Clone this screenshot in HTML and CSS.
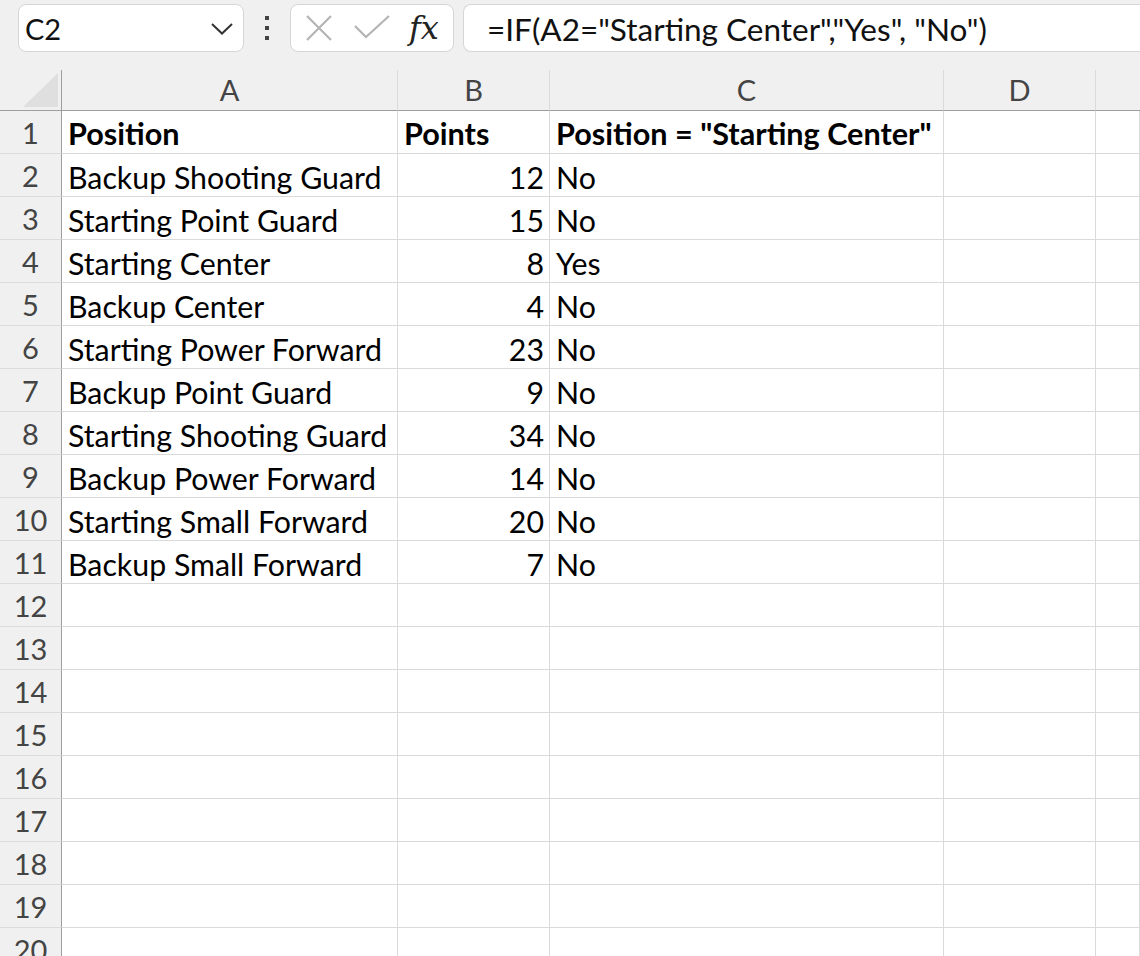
FILE: index.html
```html
<!DOCTYPE html>
<html>
<head>
<meta charset="utf-8">
<link rel="stylesheet" href="styles.css">
</head>
<body>
<div class="toolbar">
  <div class="namebox">
    <span class="name">C2</span>
    <svg class="chev" width="22" height="12" viewBox="0 0 22 12"><path d="M1 1 L11 10.5 L21 1" fill="none" stroke="#333" stroke-width="2"/></svg>
  </div>
  <div class="dots"><i></i><i></i><i></i></div>
  <div class="fxbox">
    <svg width="28" height="28" viewBox="0 0 28 28"><path d="M2 2 L26 26 M26 2 L2 26" stroke="#b4b4b4" stroke-width="2.2" fill="none"/></svg>
    <svg width="38" height="28" viewBox="0 0 38 28"><path d="M2 12 L13 23 L36 2" stroke="#b4b4b4" stroke-width="2.2" fill="none"/></svg>
    <span class="fx"><i>f</i><i>x</i></span>
  </div>
  <div class="formula">=IF(A2="Starting Center","Yes", "No")</div>
</div>
<div class="sheet">
  <div class="corner"><span class="tri"></span></div>
  <div class="ch">A</div><div class="ch">B</div><div class="ch">C</div><div class="ch">D</div><div class="ch last"></div>

  <div class="rh">1</div><div class="c b">Position</div><div class="c b">Points</div><div class="c b">Position = "Starting Center"</div><div class="c"></div><div class="c"></div>
  <div class="rh">2</div><div class="c">Backup Shooting Guard</div><div class="c n">12</div><div class="c">No</div><div class="c"></div><div class="c"></div>
  <div class="rh">3</div><div class="c">Starting Point Guard</div><div class="c n">15</div><div class="c">No</div><div class="c"></div><div class="c"></div>
  <div class="rh">4</div><div class="c">Starting Center</div><div class="c n">8</div><div class="c">Yes</div><div class="c"></div><div class="c"></div>
  <div class="rh">5</div><div class="c">Backup Center</div><div class="c n">4</div><div class="c">No</div><div class="c"></div><div class="c"></div>
  <div class="rh">6</div><div class="c">Starting Power Forward</div><div class="c n">23</div><div class="c">No</div><div class="c"></div><div class="c"></div>
  <div class="rh">7</div><div class="c">Backup Point Guard</div><div class="c n">9</div><div class="c">No</div><div class="c"></div><div class="c"></div>
  <div class="rh">8</div><div class="c">Starting Shooting Guard</div><div class="c n">34</div><div class="c">No</div><div class="c"></div><div class="c"></div>
  <div class="rh">9</div><div class="c">Backup Power Forward</div><div class="c n">14</div><div class="c">No</div><div class="c"></div><div class="c"></div>
  <div class="rh">10</div><div class="c">Starting Small Forward</div><div class="c n">20</div><div class="c">No</div><div class="c"></div><div class="c"></div>
  <div class="rh">11</div><div class="c">Backup Small Forward</div><div class="c n">7</div><div class="c">No</div><div class="c"></div><div class="c"></div>
  <div class="rh">12</div><div class="c"></div><div class="c"></div><div class="c"></div><div class="c"></div><div class="c"></div>
  <div class="rh">13</div><div class="c"></div><div class="c"></div><div class="c"></div><div class="c"></div><div class="c"></div>
  <div class="rh">14</div><div class="c"></div><div class="c"></div><div class="c"></div><div class="c"></div><div class="c"></div>
  <div class="rh">15</div><div class="c"></div><div class="c"></div><div class="c"></div><div class="c"></div><div class="c"></div>
  <div class="rh">16</div><div class="c"></div><div class="c"></div><div class="c"></div><div class="c"></div><div class="c"></div>
  <div class="rh">17</div><div class="c"></div><div class="c"></div><div class="c"></div><div class="c"></div><div class="c"></div>
  <div class="rh">18</div><div class="c"></div><div class="c"></div><div class="c"></div><div class="c"></div><div class="c"></div>
  <div class="rh">19</div><div class="c"></div><div class="c"></div><div class="c"></div><div class="c"></div><div class="c"></div>
  <div class="rh">20</div><div class="c"></div><div class="c"></div><div class="c"></div><div class="c"></div><div class="c"></div>
</div>
</body>
</html>
```

FILE: styles.css
```css
html, body {
  margin: 0;
  padding: 0;
  background: #ffffff;
  overflow: hidden;
  height: 956px;
  font-family: Lato, "Open Sans", sans-serif;
}

.toolbar {
  padding-top: 4px;
  background: #f0f0f0;
  display: flex;
  align-items: flex-start;
  box-sizing: border-box;
  height: 70px;
}

.namebox {
  margin-left: 18px;
  width: 226px;
  height: 48px;
  box-sizing: border-box;
  background: #fff;
  border: 1px solid #d6d6d6;
  border-radius: 8px;
  display: flex;
  align-items: center;
  justify-content: space-between;
  padding: 0 10px 0 6px;
}

.name {
  font-size: 29px;
  color: #111;
}

.chev {
  margin-top: 2px;
}

.dots {
  width: 46px;
  height: 48px;
  display: flex;
  flex-direction: column;
  align-items: center;
  justify-content: center;
  gap: 6px;
}

.dots i {
  display: block;
  width: 4px;
  height: 4px;
  background: #444;
}

.fxbox {
  width: 164px;
  height: 48px;
  box-sizing: border-box;
  background: #fff;
  border: 1px solid #d6d6d6;
  border-radius: 8px;
  display: flex;
  align-items: center;
  padding-left: 14px;
  gap: 20px;
}

.fx {
  font-family: "DejaVu Serif", "Liberation Serif", serif;
  font-style: italic;
  font-size: 32px;
  color: #222;
  margin-left: -2px;
}

.fx i {
  font-style: italic;
}

.formula {
  margin-left: 9px;
  flex: 1;
  height: 48px;
  box-sizing: border-box;
  background: #fff;
  border: 1px solid #d6d6d6;
  border-right: none;
  border-radius: 8px 0 0 8px;
  font-size: 31.5px;
  color: #111;
  line-height: 48px;
  padding-left: 23px;
  white-space: nowrap;
}

.sheet {
  display: grid;
  grid-template-columns: 62px 336px 152px 394px 152px 1fr;
  grid-template-rows: 41px repeat(20, 43px);
}

.corner {
  background: #f0f0f0;
  border-right: 1px solid #9e9e9e;
  border-bottom: 1px solid #9e9e9e;
  position: relative;
}

.tri {
  position: absolute;
  right: 3px;
  bottom: 3px;
  width: 0;
  height: 0;
  border-left: 35px solid transparent;
  border-bottom: 34px solid #dfdfdf;
}

.ch {
  background: #f0f0f0;
  border-right: 1px solid #dadada;
  border-bottom: 1px solid #9e9e9e;
  text-align: center;
  font-size: 29px;
  color: #444;
  line-height: 40px;
}

.ch.last {
  border-right: none;
}

.rh {
  background: #f0f0f0;
  border-right: 1px solid #9e9e9e;
  border-bottom: 1px solid #dcdcdc;
  text-align: center;
  font-size: 29px;
  color: #444;
  line-height: 44px;
}

.c {
  border-right: 1px solid #dadada;
  border-bottom: 1px solid #dadada;
  font-size: 30.3px;
  color: #000;
  line-height: 46px;
  padding-left: 6px;
  white-space: nowrap;
  overflow: visible;
}

.c.b {
  font-weight: bold;
  font-size: 30.6px;
}

.c.n {
  text-align: right;
  padding-left: 0;
  padding-right: 5px;
}
```
